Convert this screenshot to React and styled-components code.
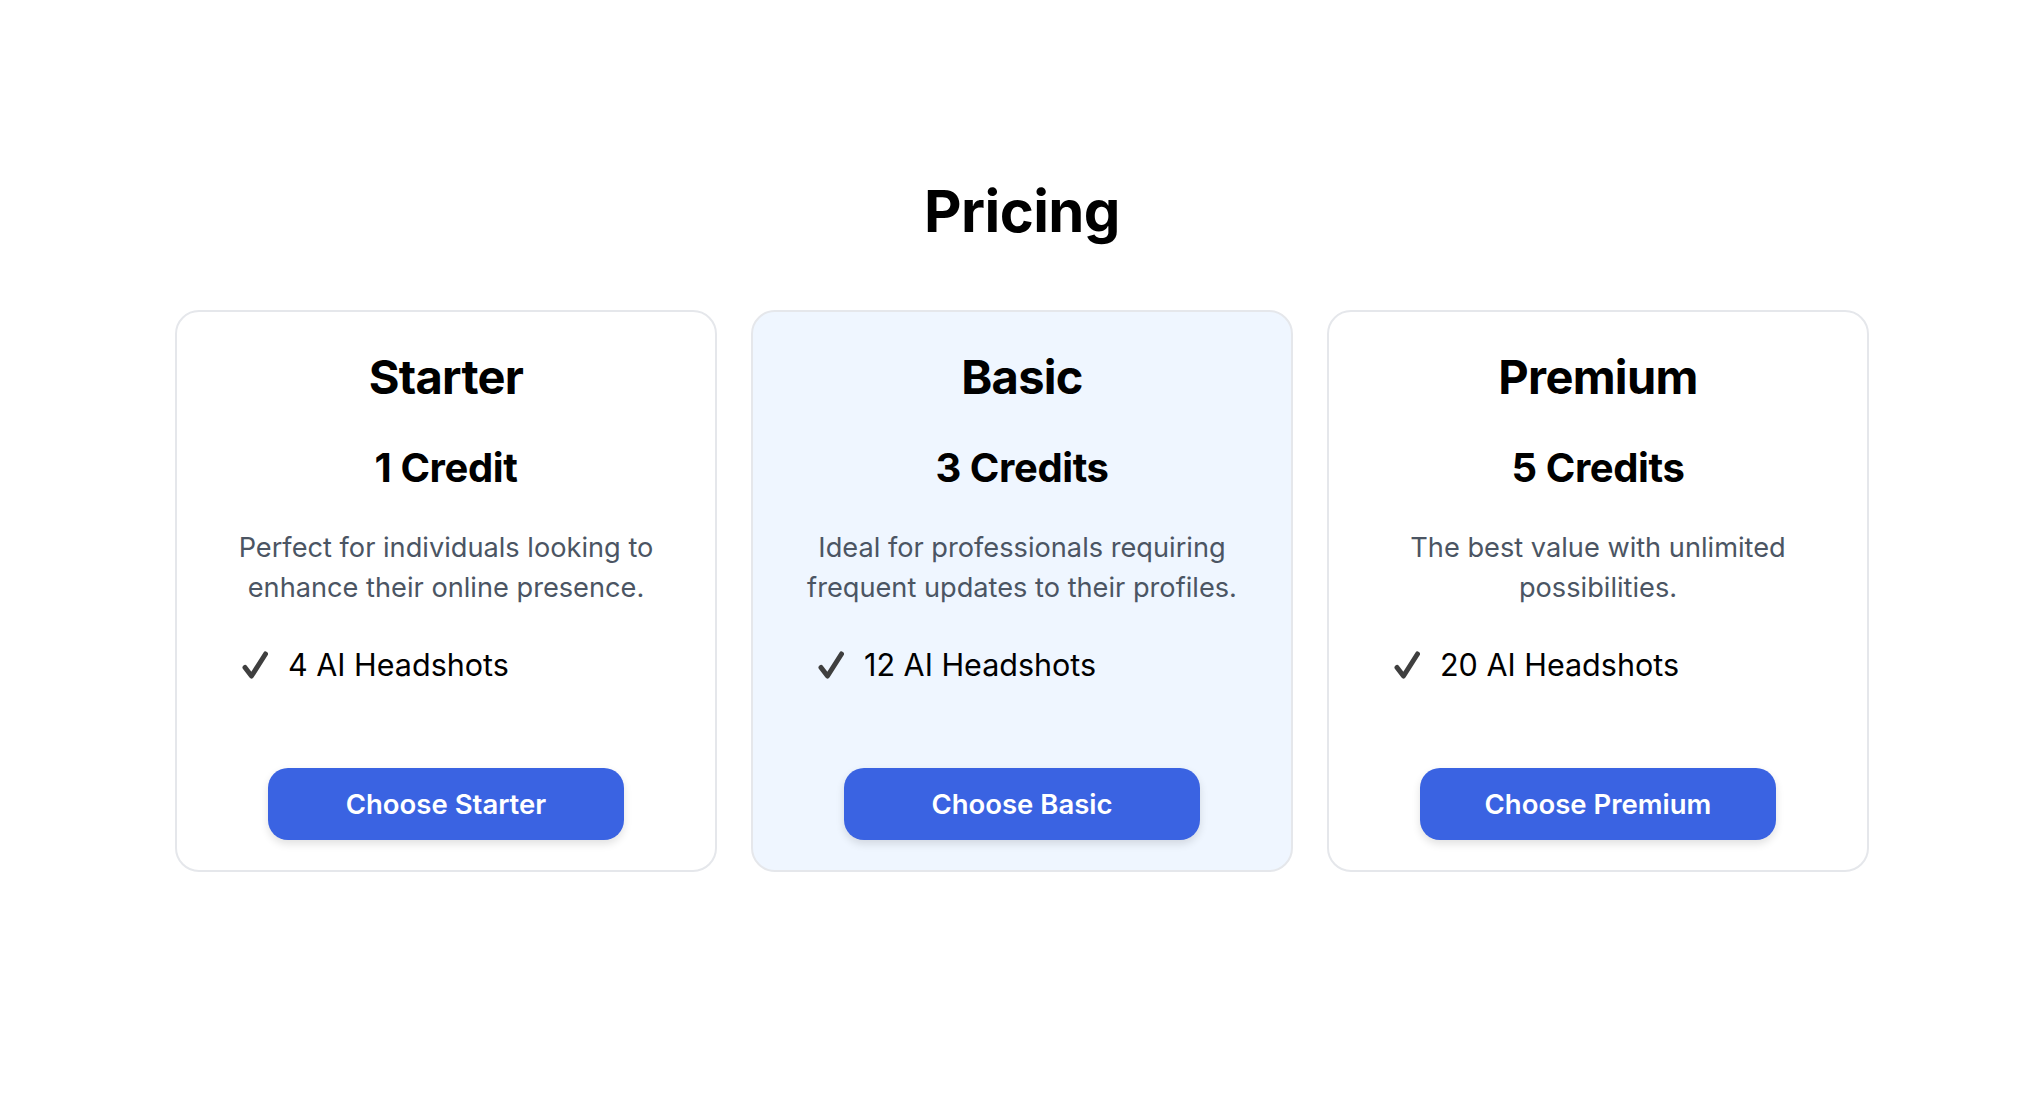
import React from 'react';
import styled, { createGlobalStyle } from 'styled-components';

const plans = [
  {
    name: 'Starter',
    credits: '1 Credit',
    description: 'Perfect for individuals looking to enhance their online presence.',
    feature: '4 AI Headshots',
    highlighted: false,
  },
  {
    name: 'Basic',
    credits: '3 Credits',
    description: 'Ideal for professionals requiring frequent updates to their profiles.',
    feature: '12 AI Headshots',
    highlighted: true,
  },
  {
    name: 'Premium',
    credits: '5 Credits',
    description: 'The best value with unlimited possibilities.',
    feature: '20 AI Headshots',
    highlighted: false,
  },
];

const CheckIcon = () => (
  <CheckSvg viewBox="0 0 26 28" aria-hidden="true">
    <path
      d="M3 16.5 L9.5 25 L23.5 3"
      fill="none"
      stroke="currentColor"
      strokeWidth="5"
      strokeLinecap="round"
      strokeLinejoin="round"
    />
  </CheckSvg>
);

const PlanCard = ({ plan }) => (
  <Card $highlighted={plan.highlighted}>
    <PlanName>{plan.name}</PlanName>
    <Credits>{plan.credits}</Credits>
    <Description>{plan.description}</Description>
    <FeatureList>
      <Feature>
        <CheckIcon />
        <span>{plan.feature}</span>
      </Feature>
    </FeatureList>
    <ChooseButton type="button">Choose {plan.name}</ChooseButton>
  </Card>
);

const App = () => (
  <>
    <GlobalStyle />
    <Page>
      <Title>Pricing</Title>
      <CardGrid>
        {plans.map((plan) => (
          <PlanCard key={plan.name} plan={plan} />
        ))}
      </CardGrid>
    </Page>
  </>
);

export default App;

// Styled-components
const GlobalStyle = createGlobalStyle`
  * {
    box-sizing: border-box;
  }

  body {
    margin: 0;
    background: #ffffff;
    font-family: Inter, "Noto Sans", "Liberation Sans", sans-serif;
    color: #000000;
  }
`;

const Page = styled.main`
  min-height: 1112px;
  padding-top: 182px;
  display: flex;
  flex-direction: column;
  align-items: center;
`;

const Title = styled.h1`
  margin: 0 0 70px;
  font-size: 58px;
  line-height: 1;
  font-weight: 700;
  letter-spacing: -0.01em;
`;

const CardGrid = styled.div`
  display: grid;
  grid-template-columns: repeat(3, 542px);
  gap: 34px;
`;

const Card = styled.div`
  display: flex;
  flex-direction: column;
  align-items: center;
  padding: 37px 32px 30px;
  border: 2px solid #e5e7eb;
  border-radius: 24px;
  background: ${({ $highlighted }) => ($highlighted ? '#eff6ff' : '#ffffff')};
`;

const PlanName = styled.h2`
  margin: 0;
  font-size: 47px;
  line-height: 1.2;
  font-weight: 700;
  letter-spacing: -0.015em;
`;

const Credits = styled.h3`
  margin: 39px 0 0;
  font-size: 40px;
  line-height: 1.2;
  font-weight: 700;
  letter-spacing: -0.01em;
`;

const Description = styled.p`
  margin: 36px 0 0;
  font-size: 27.2px;
  line-height: 40px;
  color: #4b5563;
  text-align: center;
`;

const FeatureList = styled.ul`
  align-self: stretch;
  list-style: none;
  margin: 37px 0 0;
  padding: 0 0 0 33px;
`;

const Feature = styled.li`
  display: flex;
  align-items: center;
  gap: 20px;
  font-size: 30.5px;
  line-height: 40px;
  color: #000000;
`;

const CheckSvg = styled.svg`
  width: 26px;
  height: 28px;
  flex-shrink: 0;
  color: #3f3f3f;
`;

const ChooseButton = styled.button`
  margin-top: 83px;
  width: 356px;
  height: 72px;
  border: none;
  border-radius: 20px;
  background: #3a63e2;
  color: #ffffff;
  font-family: inherit;
  font-size: 27.5px;
  font-weight: 600;
  box-shadow: 0 4px 8px rgba(0, 0, 0, 0.12);
  cursor: pointer;

  &:hover {
    background: #2f57d6;
  }
`;
